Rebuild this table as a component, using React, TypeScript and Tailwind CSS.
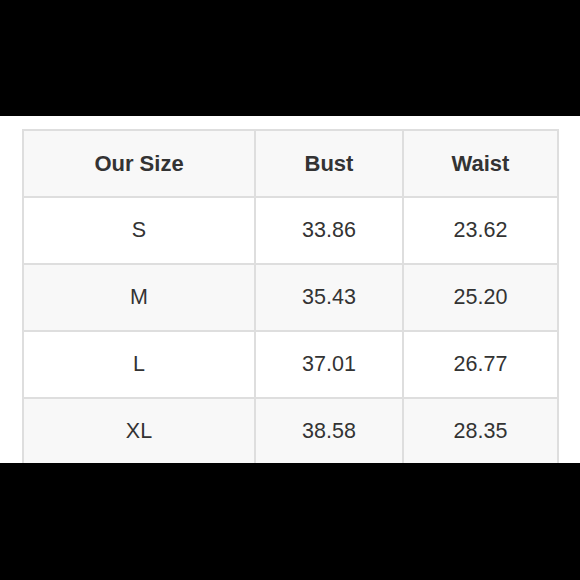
const rows = [
  { size: "S", bust: "33.86", waist: "23.62" },
  { size: "M", bust: "35.43", waist: "25.20" },
  { size: "L", bust: "37.01", waist: "26.77" },
  { size: "XL", bust: "38.58", waist: "28.35" },
]

export default function App() {
  return (
    <div className="w-[580px] h-[580px] bg-black flex flex-col font-['Liberation_Sans',Arial,sans-serif] text-[#333]">
      <div className="h-[116px] shrink-0" />
      <div className="h-[347px] shrink-0 bg-white overflow-hidden pt-[13px] pl-[22px]">
        <div className="w-[537px] grid grid-cols-[230px_146px_153px] gap-[2px] p-[2px] bg-[#dedede]">
          {["Our Size", "Bust", "Waist"].map((h) => (
            <div key={h} className="h-[65px] bg-[#f8f8f8] flex items-center justify-center text-[22px] font-bold">
              {h}
            </div>
          ))}
          {rows.map((r, i) => {
            const bg = i % 2 === 1 ? "bg-[#f8f8f8]" : "bg-white"
            return [r.size, r.bust, r.waist].map((v, j) => (
              <div key={`${i}-${j}`} className={`h-[65px] ${bg} flex items-center justify-center text-[21.5px]`}>
                {v}
              </div>
            ))
          })}
        </div>
      </div>
      <div className="flex-1" />
    </div>
  )
}
